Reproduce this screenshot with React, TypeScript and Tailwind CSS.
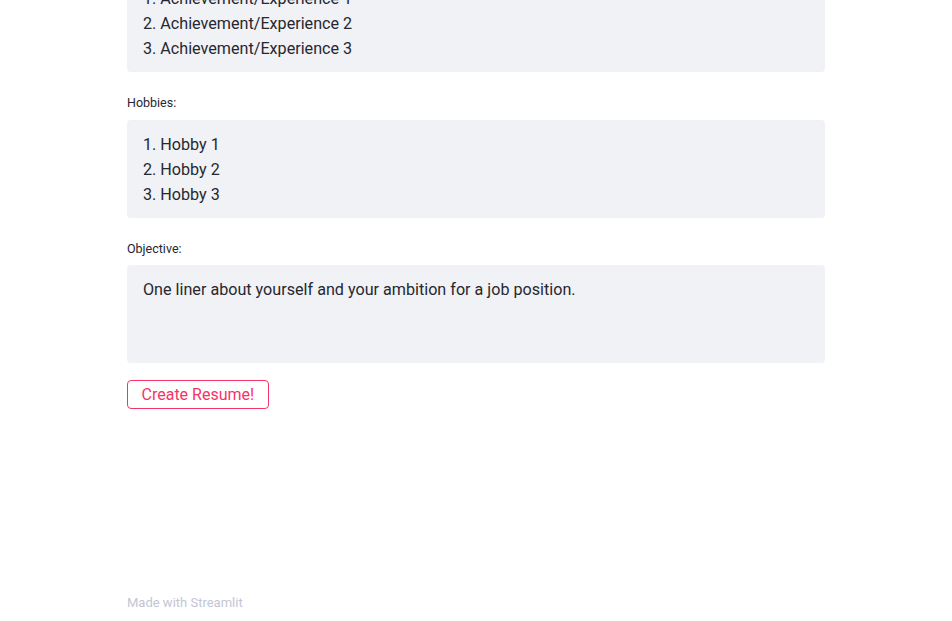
import React from "react";

const font = { fontFamily: 'Roboto, "Noto Sans", sans-serif' };

function Box({ lines }: { lines: string[] }) {
  return (
    <div className="h-[98px] w-full rounded-[4px] bg-[#f0f2f6] px-4 pt-[12px] text-[16.15px] leading-[25px] text-[#262730]">
      {lines.map((l, i) => (
        <div key={i}>{l}</div>
      ))}
    </div>
  );
}

function Label({ children }: { children: React.ReactNode }) {
  return <div className="text-[12.5px] leading-[16px] text-[#262730]">{children}</div>;
}

export default function App() {
  return (
    <div className="h-[621px] w-[952px] overflow-hidden bg-white" style={font}>
      <div className="flex w-[698px] flex-col ml-[127px]">
        <div className="mt-[-26px]">
          <Box
            lines={[
              "1. Achievement/Experience 1",
              "2. Achievement/Experience 2",
              "3. Achievement/Experience 3",
            ]}
          />
        </div>
        <div className="mt-[23px]">
          <Label>Hobbies:</Label>
        </div>
        <div className="mt-[9px]">
          <Box lines={["1. Hobby 1", "2. Hobby 2", "3. Hobby 3"]} />
        </div>
        <div className="mt-[23px]">
          <Label>Objective:</Label>
        </div>
        <div className="mt-[8px]">
          <Box lines={["One liner about yourself and your ambition for a job position."]} />
        </div>
        <div className="mt-[17px]">
          <button className="h-[29px] rounded-[4px] border border-[#f63366] bg-white px-[13.5px] text-[16px] leading-[20px] text-[#f63366]">
            Create Resume!
          </button>
        </div>
        <div className="mt-[186px] text-[13px] leading-[16px] text-[#c4c5d4]">Made with Streamlit</div>
      </div>
    </div>
  );
}
